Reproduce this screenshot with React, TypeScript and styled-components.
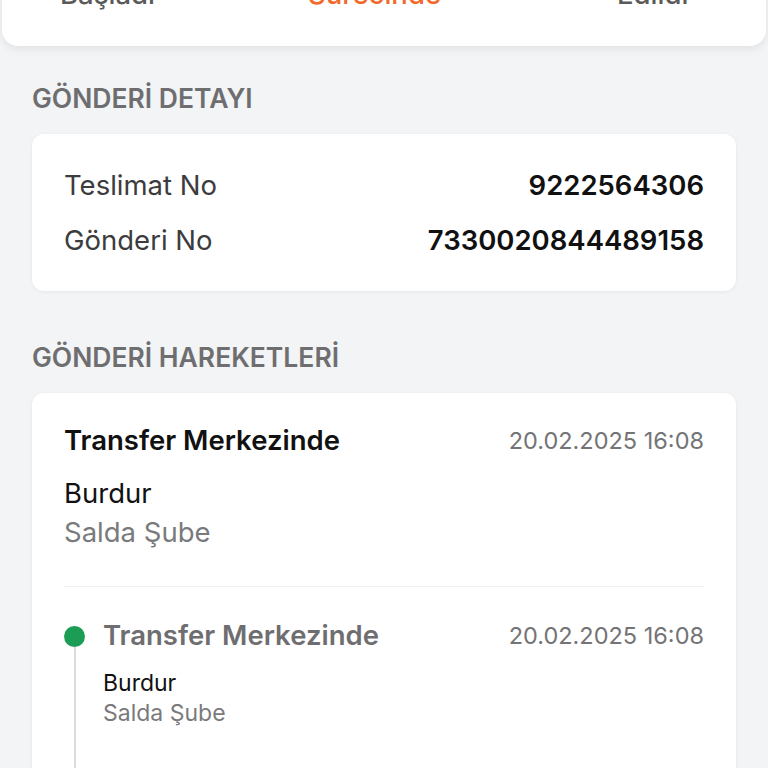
import React from "react";
import styled, { createGlobalStyle } from "styled-components";

const GlobalStyle = createGlobalStyle`
  html, body {
    margin: 0;
    padding: 0;
    background: #f3f4f6;
  }
  body {
    font-family: Inter, "Noto Sans", "Liberation Sans", sans-serif;
    overflow: hidden;
  }
  #root {
    display: flow-root;
  }
`;

const Page = styled.div`
  width: 768px;
  height: 768px;
  overflow: hidden;
  background: #f3f4f6;
`;

const TopCard = styled.div`
  margin: -20px 2px 0;
  padding: 0 0 38px;
  background: #ffffff;
  border-radius: 0 0 16px 16px;
  box-shadow: 0 3px 8px rgba(0, 0, 0, 0.08);
`;

const Tabs = styled.div`
  display: grid;
  grid-template-columns: 248px 309px 1fr;
  padding-left: 58px;
`;

type tabProps = {
  $active?: boolean;
};
const Tab = styled.span<tabProps>`
  font-size: 27.5px;
  line-height: 28px;
  font-weight: 500;
  color: ${({ $active }) => ($active ? "#f26a2b" : "#5a5a5a")};
`;

const Content = styled.div`
  padding: 0 32px;
`;

const SectionTitle = styled.h2`
  margin: 0;
  font-size: 26.5px;
  line-height: 30px;
  font-weight: 600;
  color: #6e6e70;
`;

const Card = styled.div`
  background: #ffffff;
  border-radius: 12px;
  box-shadow: 0 1px 4px rgba(0, 0, 0, 0.06);
`;

const DetailCard = styled(Card)`
  margin-top: 21px;
  padding: 23px 32px 24px;
`;

const DetailRow = styled.div`
  display: flex;
  justify-content: space-between;
  align-items: center;
  height: 55px;
  font-size: 27.5px;
`;

const DetailLabel = styled.span`
  color: #3c3c3e;
`;

const DetailValue = styled.span`
  color: #111111;
  font-weight: 600;
`;

const DetailSection = styled.section`
  padding-top: 37px;
`;

const MovementsSection = styled.section`
  padding-top: 51px;
`;

const MovementCard = styled(Card)`
  margin-top: 21px;
  padding: 30px 32px 0;
  height: 420px;
`;

const Head = styled.div`
  display: flex;
  justify-content: space-between;
  align-items: center;
`;

type titleProps = {
  $muted?: boolean;
};
const MoveTitle = styled.span<titleProps>`
  font-size: 27.5px;
  line-height: 34px;
  font-weight: 600;
  color: ${({ $muted }) => ($muted ? "#6e6e70" : "#111111")};
`;

const Date = styled.span`
  font-size: 23.5px;
  color: #747476;
`;

type placeProps = {
  $small?: boolean;
};
const City = styled.div<placeProps>`
  font-size: ${({ $small }) => ($small ? "23px" : "27.5px")};
  line-height: ${({ $small }) => ($small ? "30px" : "39px")};
  color: #111111;
`;

const Branch = styled(City)`
  color: #7a7a7c;
`;

const LatestPlace = styled.div`
  margin-top: 17px;
`;

const Divider = styled.hr`
  margin: 34px 0 0;
  border: none;
  border-top: 1px solid #f0f0f2;
`;

const Timeline = styled.div`
  padding-top: 31px;
`;

const TimelineItem = styled.div`
  display: grid;
  grid-template-columns: 39px 1fr;
`;

const Rail = styled.div`
  display: flex;
  flex-direction: column;
  align-items: center;
  width: 21px;
  padding-top: 8px;
`;

const Dot = styled.span`
  width: 21px;
  height: 21px;
  border-radius: 50%;
  background: #1c9d55;
  flex-shrink: 0;
`;

const Line = styled.span`
  width: 2px;
  flex: 1;
  min-height: 160px;
  background: #dcdcde;
`;

const ItemBody = styled.div`
  display: flex;
  flex-direction: column;
`;

const ItemPlace = styled.div`
  margin-top: 16px;
`;

export default function App() {
  return (
    <Page>
      <GlobalStyle />
      <TopCard>
        <Tabs>
          <Tab>Başladı</Tab>
          <Tab $active>Sürecinde</Tab>
          <Tab>Edildi</Tab>
        </Tabs>
      </TopCard>
      <Content>
        <DetailSection>
          <SectionTitle>GÖNDERİ DETAYI</SectionTitle>
          <DetailCard>
            <DetailRow>
              <DetailLabel>Teslimat No</DetailLabel>
              <DetailValue>9222564306</DetailValue>
            </DetailRow>
            <DetailRow>
              <DetailLabel>Gönderi No</DetailLabel>
              <DetailValue>7330020844489158</DetailValue>
            </DetailRow>
          </DetailCard>
        </DetailSection>
        <MovementsSection>
          <SectionTitle>GÖNDERİ HAREKETLERİ</SectionTitle>
          <MovementCard>
            <Head>
              <MoveTitle>Transfer Merkezinde</MoveTitle>
              <Date>20.02.2025 16:08</Date>
            </Head>
            <LatestPlace>
              <City>Burdur</City>
              <Branch>Salda Şube</Branch>
            </LatestPlace>
            <Divider />
            <Timeline>
              <TimelineItem>
                <Rail>
                  <Dot />
                  <Line />
                </Rail>
                <ItemBody>
                  <Head>
                    <MoveTitle $muted>Transfer Merkezinde</MoveTitle>
                    <Date>20.02.2025 16:08</Date>
                  </Head>
                  <ItemPlace>
                    <City $small>Burdur</City>
                    <Branch $small>Salda Şube</Branch>
                  </ItemPlace>
                </ItemBody>
              </TimelineItem>
            </Timeline>
          </MovementCard>
        </MovementsSection>
      </Content>
    </Page>
  );
}
